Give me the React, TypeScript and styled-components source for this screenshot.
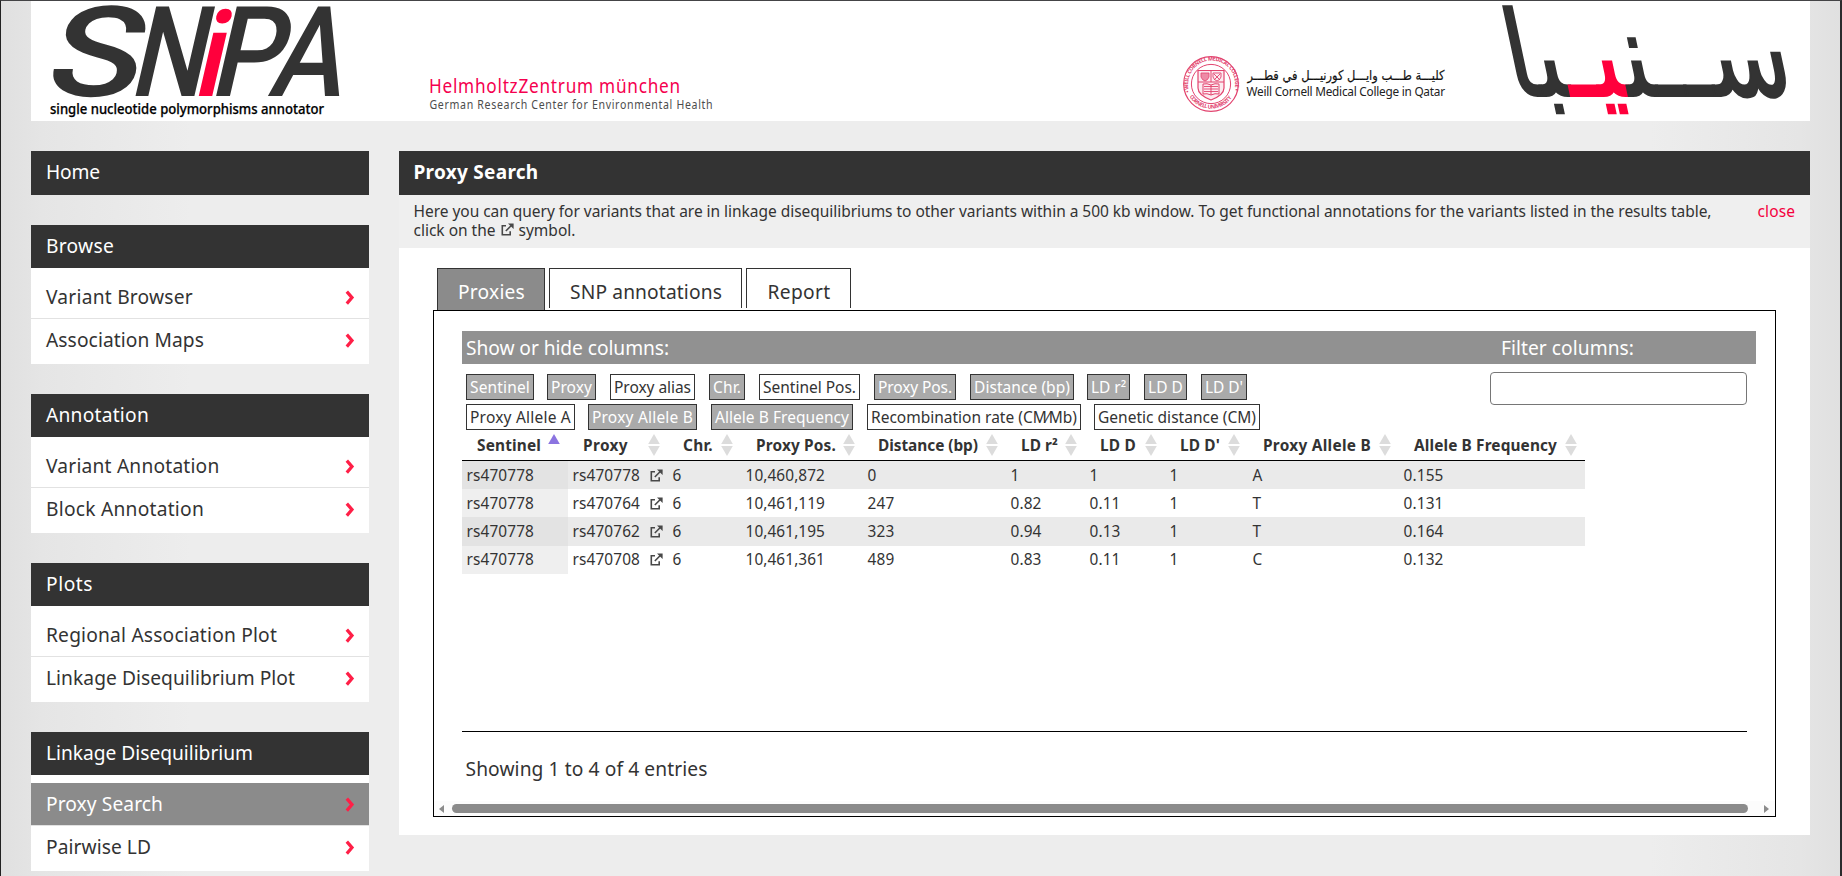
import React, { useLayoutEffect, useRef, useState } from "react";
import styled, { createGlobalStyle } from "styled-components";

const sans = `"Noto Sans", "Open Sans", sans-serif`;
const ink = "#333333";
const red = "#ff003c";

const GlobalStyle = createGlobalStyle`
  * { box-sizing: border-box; }
  body { margin: 0; background: #ededed; color: ${ink}; font-family: ${sans}; }
`;

/* ---------- text that keeps a given measure, by letter spacing ---------- */

const FitSpan = styled.span`
  display: inline-block;
  white-space: nowrap;
  text-align: left;
`;

function Fit({ w, children }: { w: number; children: string }) {
  const ref = useRef<HTMLSpanElement>(null);
  const [spacing, setSpacing] = useState(0);
  useLayoutEffect(() => {
    const el = ref.current;
    if (!el) return;
    el.style.letterSpacing = "0px";
    const natural = el.getBoundingClientRect().width;
    setSpacing((w - natural) / children.length);
    el.style.letterSpacing = `${(w - natural) / children.length}px`;
  }, [w, children]);
  return (
    <FitSpan ref={ref} style={{ letterSpacing: `${spacing}px` }}>
      {children}
    </FitSpan>
  );
}

/* ---------- page frame ---------- */

const Page = styled.div`
  height: 876px;
  overflow: hidden;
  padding: 0 30px;
  border-top: 1px solid #444446;
  border-left: 1px solid #222;
  border-right: 2px solid #2b2b2d;
  background: linear-gradient(
    to right,
    #e0e0e0 0,
    #e5e5e5 40px,
    #ededed 190px,
    #ededed calc(100% - 190px),
    #e5e5e5 calc(100% - 40px),
    #e0e0e0 100%
  );
`;

const Header = styled.header`
  display: flex;
  width: 1779px;
  height: 120px;
  background: #fff;
`;

const HeaderArt = styled.svg<{ $gap: number }>`
  flex: none;
  display: block;
  margin-left: ${(p) => p.$gap}px;
  overflow: visible;
  font-family: ${sans};
`;

const Columns = styled.div`
  display: flex;
  align-items: flex-start;
  gap: 30px;
  padding-top: 30px;
  width: 1779px;
`;

/* ---------- side navigation ---------- */

const Sidebar = styled.nav`
  flex: none;
  display: flex;
  flex-direction: column;
  gap: 30px;
  width: 338px;
`;

const NavBlock = styled.section`
  background: #fff;
`;

const NavHeading = styled.h2<{ $h?: number }>`
  margin: 0;
  height: ${(p) => p.$h ?? 43}px;
  padding: 0 0 3px 15px;
  display: flex;
  align-items: center;
  background: ${ink};
  color: #fff;
  font-size: 19.2px;
  font-weight: 400;
`;

const NavList = styled.ul`
  margin: 0;
  padding: 8px 0 3px;
  list-style: none;
`;

const NavItem = styled.li<{ $active?: boolean }>`
  display: flex;
  align-items: center;
  justify-content: space-between;
  height: 42px;
  padding: 0 14px 0 15px;
  font-size: 19.2px;
  background: ${(p) => (p.$active ? "#8b8b8b" : "#fff")};
  color: ${(p) => (p.$active ? "#fff" : ink)};
  & + & {
    box-shadow: 0 -1px 0 #e2e2e2;
    margin-top: 1px;
  }
  & > span {
    margin-bottom: 2px;
  }
`;

const Chevron = () => (
  <svg width="10" height="16" viewBox="0 0 10 16">
    <path d="M1.8 2.6 L7 8.6 L1.8 14.6" fill="none" stroke="#ff1f47" strokeWidth="3.2" />
  </svg>
);

type NavGroup = { title: string; w: number; items: { label: string; w: number; active?: boolean }[] };

const groups: NavGroup[] = [
  { title: "Browse", w: 68, items: [{ label: "Variant Browser", w: 147 }, { label: "Association Maps", w: 158 }] },
  { title: "Annotation", w: 103, items: [{ label: "Variant Annotation", w: 173.5 }, { label: "Block Annotation", w: 158 }] },
  { title: "Plots", w: 47, items: [{ label: "Regional Association Plot", w: 231 }, { label: "Linkage Disequilibrium Plot", w: 249 }] },
  { title: "Linkage Disequilibrium", w: 207, items: [{ label: "Proxy Search", w: 117, active: true }, { label: "Pairwise LD", w: 105 }] },
];

/* ---------- main column ---------- */

const Main = styled.main`
  flex: none;
  width: 1411px;
  height: 684px;
  background: #fff;
`;

const Title = styled.h1`
  margin: 0;
  height: 44px;
  padding: 0 0 3px 14.5px;
  display: flex;
  align-items: center;
  background: ${ink};
  color: #fff;
  font-size: 19px;
  font-weight: 700;
`;

const Info = styled.div`
  display: flex;
  justify-content: space-between;
  height: 53px;
  padding: 7px 15px 0 14.5px;
  background: #efefef;
  font-size: 15.5px;
  line-height: 19px;
`;

const InfoLine = styled.div`
  display: flex;
  gap: 5px;
  align-items: center;
  & > svg {
    margin-bottom: 2px;
  }
`;

const Close = styled.a`
  color: #f5003d;
`;

const Tabs = styled.div`
  display: flex;
  gap: 4px;
  margin: 20px 0 0 38px;
  height: 42px;
`;

const Tab = styled.div<{ $active?: boolean; $w: number }>`
  display: flex;
  align-items: center;
  justify-content: center;
  width: ${(p) => p.$w}px;
  height: ${(p) => (p.$active ? 42 : 40)}px;
  padding-top: ${(p) => (p.$active ? 3 : 5)}px;
  padding-left: 1px;
  border: 1px solid ${ink};
  border-bottom: 0;
  background: ${(p) => (p.$active ? "#8b8b8b" : "#fff")};
  color: ${(p) => (p.$active ? "#fff" : ink)};
  font-size: 19.2px;
`;

const Panel = styled.section`
  display: flex;
  flex-direction: column;
  width: 1343px;
  height: 507px;
  margin-left: 34px;
  border: 1px solid #000;
  padding-top: 20px;
`;

const GreyBar = styled.div`
  display: flex;
  justify-content: space-between;
  align-items: center;
  flex: none;
  width: 1294px;
  height: 33px;
  margin-left: 28px;
  padding: 0 122px 1px 4px;
  background: #919191;
  color: #fff;
  font-size: 19.2px;
`;

const Controls = styled.div`
  display: flex;
  justify-content: space-between;
  width: 1281px;
  height: 67px;
  margin-left: 32px;
`;

const ChipRows = styled.div`
  display: flex;
  flex-direction: column;
  gap: 4px;
  padding-top: 10px;
`;

const ChipRow = styled.div`
  display: flex;
`;

const Chip = styled.button<{ $on: boolean; $w: number; $gap: number }>`
  display: flex;
  align-items: center;
  justify-content: center;
  width: ${(p) => p.$w}px;
  height: 26px;
  margin: 0 ${(p) => p.$gap}px 0 0;
  padding: 0;
  border: 1px solid ${ink};
  background: ${(p) => (p.$on ? "#aaaaaa" : "#fff")};
  color: ${(p) => (p.$on ? "#fff" : ink)};
  font: 15.5px ${sans};
`;

const FilterInput = styled.input`
  width: 257px;
  height: 33px;
  margin-top: 8px;
  border: 1px solid #767676;
  border-radius: 4px;
  background: #fff;
`;

const chipRows: [string, number, boolean, number][][] = [
  [
    ["Sentinel", 68, true, 13], ["Proxy", 49, true, 14], ["Proxy alias", 85, false, 14], ["Chr.", 36, true, 14],
    ["Sentinel Pos.", 101, false, 14], ["Proxy Pos.", 82, true, 14], ["Distance (bp)", 104, true, 13],
    ["LD r²", 43, true, 14], ["LD D", 43, true, 14], ["LD D'", 46, true, 0],
  ],
  [
    ["Proxy Allele A", 109, false, 13], ["Proxy Allele B", 109, true, 14], ["Allele B Frequency", 142, true, 14],
    ["Recombination rate (CM⁄Mb)", 214, false, 13], ["Genetic distance (CM)", 166, false, 0],
  ],
];

/* ---------- results table ---------- */

const Table = styled.div`
  width: 1123px;
  margin-left: 28px;
  font-size: 15.4px;
`;

const Row = styled.div<{ $odd?: boolean; $h?: number }>`
  display: grid;
  grid-template-columns: 106px 100px 73px 122px 143px 79px 80px 83px 151px 186px;
  height: ${(p) => p.$h ?? 28}px;
  background: ${(p) => (p.$odd ? "#eaeaea" : "#fff")};
`;

const HeadRow = styled(Row)`
  height: 30px;
  padding-bottom: 1px;
  border-bottom: 1px solid #000;
  font-weight: 700;
`;

const HeadCell = styled.div`
  display: flex;
  align-items: center;
  justify-content: space-between;
  padding: 0 8px 0 15px;
  & > svg {
    margin-bottom: 1px;
  }
`;

const Cell = styled.div<{ $shade?: string; $raised?: boolean }>`
  display: flex;
  align-items: center;
  gap: 9.5px;
  padding: 0 0 ${(p) => (p.$raised ? 1 : 0)}px 4.5px;
  background: ${(p) => p.$shade ?? "transparent"};
`;

const SortIcon = ({ active }: { active?: boolean }) => (
  <svg width="12" height="24" viewBox="0 0 12 24">
    <path d="M6 1 L11.8 11 H0.2 Z" fill={active ? "#8b74e0" : "#dcdcdc"} />
    {!active && <path d="M0.2 13 H11.8 L6 23 Z" fill="#dcdcdc" />}
  </svg>
);

const LinkIcon = () => (
  <svg width="13" height="13" viewBox="0 0 13 13" fill="none" stroke="#484848" strokeWidth="1.6">
    <path d="M5 2.8 H1.3 V11.7 H9.2 V8.2" />
    <path d="M4.8 8 L10.8 2" />
    <path d="M7 0.4 H12.6 V6 Z" fill="#484848" stroke="none" />
  </svg>
);

const heads: [string, number][] = [
  ["Sentinel", 64], ["Proxy", 45], ["Chr.", 30], ["Proxy Pos.", 80], ["Distance (bp)", 100],
  ["LD r²", 37], ["LD D", 36], ["LD D'", 40], ["Proxy Allele B", 108], ["Allele B Frequency", 143],
];

const rows = [
  ["rs470778", "rs470778", "6", "10,460,872", "0", "1", "1", "1", "A", "0.155"],
  ["rs470778", "rs470764", "6", "10,461,119", "247", "0.82", "0.11", "1", "T", "0.131"],
  ["rs470778", "rs470762", "6", "10,461,195", "323", "0.94", "0.13", "1", "T", "0.164"],
  ["rs470778", "rs470708", "6", "10,461,361", "489", "0.83", "0.11", "1", "C", "0.132"],
];

const cellWidth = (text: string, col: number) => {
  if (col < 2) return 67.5;
  if (text.length === 1) return 9;
  if (col === 3) return 79.5;
  return text.length === 3 ? 27 : text.length === 4 ? 31 : 40;
};

const Footer = styled.div`
  width: 1285px;
  height: 70px;
  margin: auto 0 0 28px;
  padding: 23px 0 0 3.5px;
  border-top: 1px solid #000;
  font-size: 19.2px;
`;

const ScrollBar = styled.div`
  display: flex;
  align-items: center;
  justify-content: space-between;
  flex: none;
  height: 15px;
  padding: 0 6px 0 5px;
  background: #fcfcfc;
`;

const Thumb = styled.div`
  width: 1296px;
  height: 9px;
  margin: 0 16px 0 8px;
  border-radius: 5px;
  background: #8b8b8b;
`;

const Arrow = styled.i<{ $dir: "left" | "right" }>`
  border: 4.5px solid transparent;
  border-${(p) => p.$dir}-width: 0;
  border-${(p) => (p.$dir === "left" ? "right" : "left")}: 5px solid #8b8b8b;
`;

/* ---------- header artwork ---------- */

const SnipaLogo = () => (
  <HeaderArt $gap={19} width="296" height="120" viewBox="50 1 296 120" fill={ink}>
    <g fontFamily="Roboto, sans-serif" fontWeight="500" fontSize="126">
      <text transform="translate(42 96) skewX(-13)" textLength="94" lengthAdjust="spacingAndGlyphs">S</text>
      <text transform="translate(128 96) skewX(-13)" textLength="74" lengthAdjust="spacingAndGlyphs">N</text>
      <text transform="translate(191 96) skewX(-13) scale(1 0.95)" textLength="29" lengthAdjust="spacingAndGlyphs" fill={red}>i</text>
      <text transform="translate(208 96) skewX(-13)" textLength="72" lengthAdjust="spacingAndGlyphs">P</text>
      <text transform="translate(267 96) skewX(-13)" textLength="73" lengthAdjust="spacingAndGlyphs">A</text>
    </g>
    <text x="50" y="114" fontSize="14" fontWeight="500" fill="#000" stroke="#000" strokeWidth="0.25" textLength="274" lengthAdjust="spacingAndGlyphs">
      single nucleotide polymorphisms annotator
    </text>
  </HeaderArt>
);

const HelmholtzLogo = () => (
  <HeaderArt $gap={84} width="284" height="120" viewBox="430 1 284 120">
    <g transform="translate(429 93) scale(0.84 1)">
      <text fontSize="20.5" fill="#f5004f" textLength="299">HelmholtzZentrum münchen</text>
    </g>
    <g transform="translate(429.5 109) scale(0.84 1)">
      <text fontSize="12.6" fill="#4c4c4c" textLength="337">German Research Center for Environmental Health</text>
    </g>
  </HeaderArt>
);

const CornellLogo = () => (
  <HeaderArt $gap={468} width="264" height="120" viewBox="1182 1 264 120">
    <g fill="none" stroke="#e2446f">
      <circle cx="1211" cy="84" r="27.3" strokeWidth="1.2" />
      <circle cx="1211" cy="84" r="19.6" strokeWidth="1" />
      <path id="sealTop" d="M1188.9 92 A23.5 23.5 0 1 1 1233.1 92" stroke="none" transform="translate(0.6 0)" />
      <path id="sealBottom" d="M1189.5 96.5 A25.2 25.2 0 0 0 1232.5 96.5" stroke="none" />
      <path d="M1198 70.5 H1224 V88 Q1224 95 1211 100 Q1198 95 1198 88 Z" strokeWidth="1.2" fill="#fdeaf0" />
      <path d="M1198 82 H1224 M1211 71 V82" strokeWidth="1" />
      <path d="M1201 73 H1209 V77 Q1208 80 1205 81 Q1202 80 1201 77 Z" fill="#ee8ba6" strokeWidth="0.8" />
      <path d="M1213 73 H1221 V77 Q1220 80 1217 81 Q1214 80 1213 77 Z M1214 74 L1220 80 M1220 74 L1214 80" strokeWidth="0.9" />
      <path d="M1203 84 Q1207 83 1211 85 Q1215 83 1219 84 V94 Q1215 93 1211 95 Q1207 93 1203 94 Z M1211 85 V95" strokeWidth="1" />
      <path d="M1204 86.5 H1218 M1204 89 H1218 M1204 91.5 H1218" strokeWidth="0.9" />
    </g>
    <g fill="#e2446f" fontSize="5.4" fontWeight="700">
      <text><textPath href="#sealTop" textLength="88">• WEILL CORNELL MEDICAL COLLEGE •</textPath></text>
      <text><textPath href="#sealBottom" startOffset="0" textLength="50">CORNELL UNIVERSITY</textPath></text>
    </g>
    <text x="1346" y="79.5" fontFamily="DejaVu Sans, sans-serif" fontSize="13.5" fill="#111" stroke="#111" strokeWidth="0.2" textAnchor="middle" direction="rtl" textLength="197" lengthAdjust="spacingAndGlyphs">
      كليـــة طـــب وايـــل كورنيـــل في قطـــر
    </text>
    <text x="1246.5" y="96" fontSize="11.8" fill="#222" textLength="198.5">Weill Cornell Medical College in Qatar</text>
  </HeaderArt>
);

const ArabicLogo = () => (
  <HeaderArt $gap={57} width="284" height="120" viewBox="1503 1 284 120" fill={ink}>
    <g transform="translate(1655 96) skewX(12)">
      <text fontFamily="DejaVu Sans, sans-serif" fontSize="118" stroke={ink} strokeWidth="2" textAnchor="middle" direction="rtl" textLength="284" lengthAdjust="spacingAndGlyphs">
        ســن<tspan fill={red} stroke={red}>يـ</tspan>با
      </text>
    </g>
  </HeaderArt>
);

/* ---------- application ---------- */

export default function App() {
  return (
    <>
      <GlobalStyle />
      <Page>
        <Header>
          <SnipaLogo />
          <HelmholtzLogo />
          <CornellLogo />
          <ArabicLogo />
        </Header>
        <Columns>
          <Sidebar>
            <NavHeading $h={44}><Fit w={54}>Home</Fit></NavHeading>
            {groups.map((g) => (
              <NavBlock key={g.title}>
                <NavHeading><Fit w={g.w}>{g.title}</Fit></NavHeading>
                <NavList>
                  {g.items.map((it) => (
                    <NavItem key={it.label} $active={it.active}>
                      <Fit w={it.w}>{it.label}</Fit>
                      <Chevron />
                    </NavItem>
                  ))}
                </NavList>
              </NavBlock>
            ))}
          </Sidebar>
          <Main>
            <Title><Fit w={125}>Proxy Search</Fit></Title>
            <Info>
              <div>
                <InfoLine>
                  <Fit w={1298}>
                    Here you can query for variants that are in linkage disequilibriums to other variants within a 500 kb window. To get functional annotations for the variants listed in the results table,
                  </Fit>
                </InfoLine>
                <InfoLine>
                  <Fit w={82}>click on the</Fit>
                  <LinkIcon />
                  <Fit w={57}>symbol.</Fit>
                </InfoLine>
              </div>
              <Close><Fit w={37.5}>close</Fit></Close>
            </Info>
            <Tabs>
              <Tab $w={108} $active><Fit w={67}>Proxies</Fit></Tab>
              <Tab $w={193}><Fit w={152}>SNP annotations</Fit></Tab>
              <Tab $w={105}><Fit w={63}>Report</Fit></Tab>
            </Tabs>
            <Panel>
              <GreyBar>
                <Fit w={203}>Show or hide columns:</Fit>
                <Fit w={133}>Filter columns:</Fit>
              </GreyBar>
              <Controls>
                <ChipRows>
                  {chipRows.map((row, i) => (
                    <ChipRow key={i}>
                      {row.map(([label, w, on, gap]) => (
                        <Chip key={label} $on={on} $w={w} $gap={gap}>
                          <Fit w={w - 8}>{label}</Fit>
                        </Chip>
                      ))}
                    </ChipRow>
                  ))}
                </ChipRows>
                <FilterInput />
              </Controls>
              <Table>
                <HeadRow>
                  {heads.map(([label, w], i) => (
                    <HeadCell key={label}>
                      <Fit w={w}>{label}</Fit>
                      <SortIcon active={i === 0} />
                    </HeadCell>
                  ))}
                </HeadRow>
                {rows.map((r, i) => (
                  <Row key={r[1]} $odd={i % 2 === 0} $h={i === 2 ? 29 : 28}>
                    {r.map((text, c) => (
                      <Cell key={c} $raised={i > 1} $shade={c === 0 ? (i % 2 === 0 ? "#e3e3e3" : "#efefef") : undefined}>
                        <Fit w={cellWidth(text, c)}>{text}</Fit>
                        {c === 1 && <LinkIcon />}
                      </Cell>
                    ))}
                  </Row>
                ))}
              </Table>
              <Footer><Fit w={242}>Showing 1 to 4 of 4 entries</Fit></Footer>
              <ScrollBar>
                <Arrow $dir="left" />
                <Thumb />
                <Arrow $dir="right" />
              </ScrollBar>
            </Panel>
          </Main>
        </Columns>
      </Page>
    </>
  );
}
